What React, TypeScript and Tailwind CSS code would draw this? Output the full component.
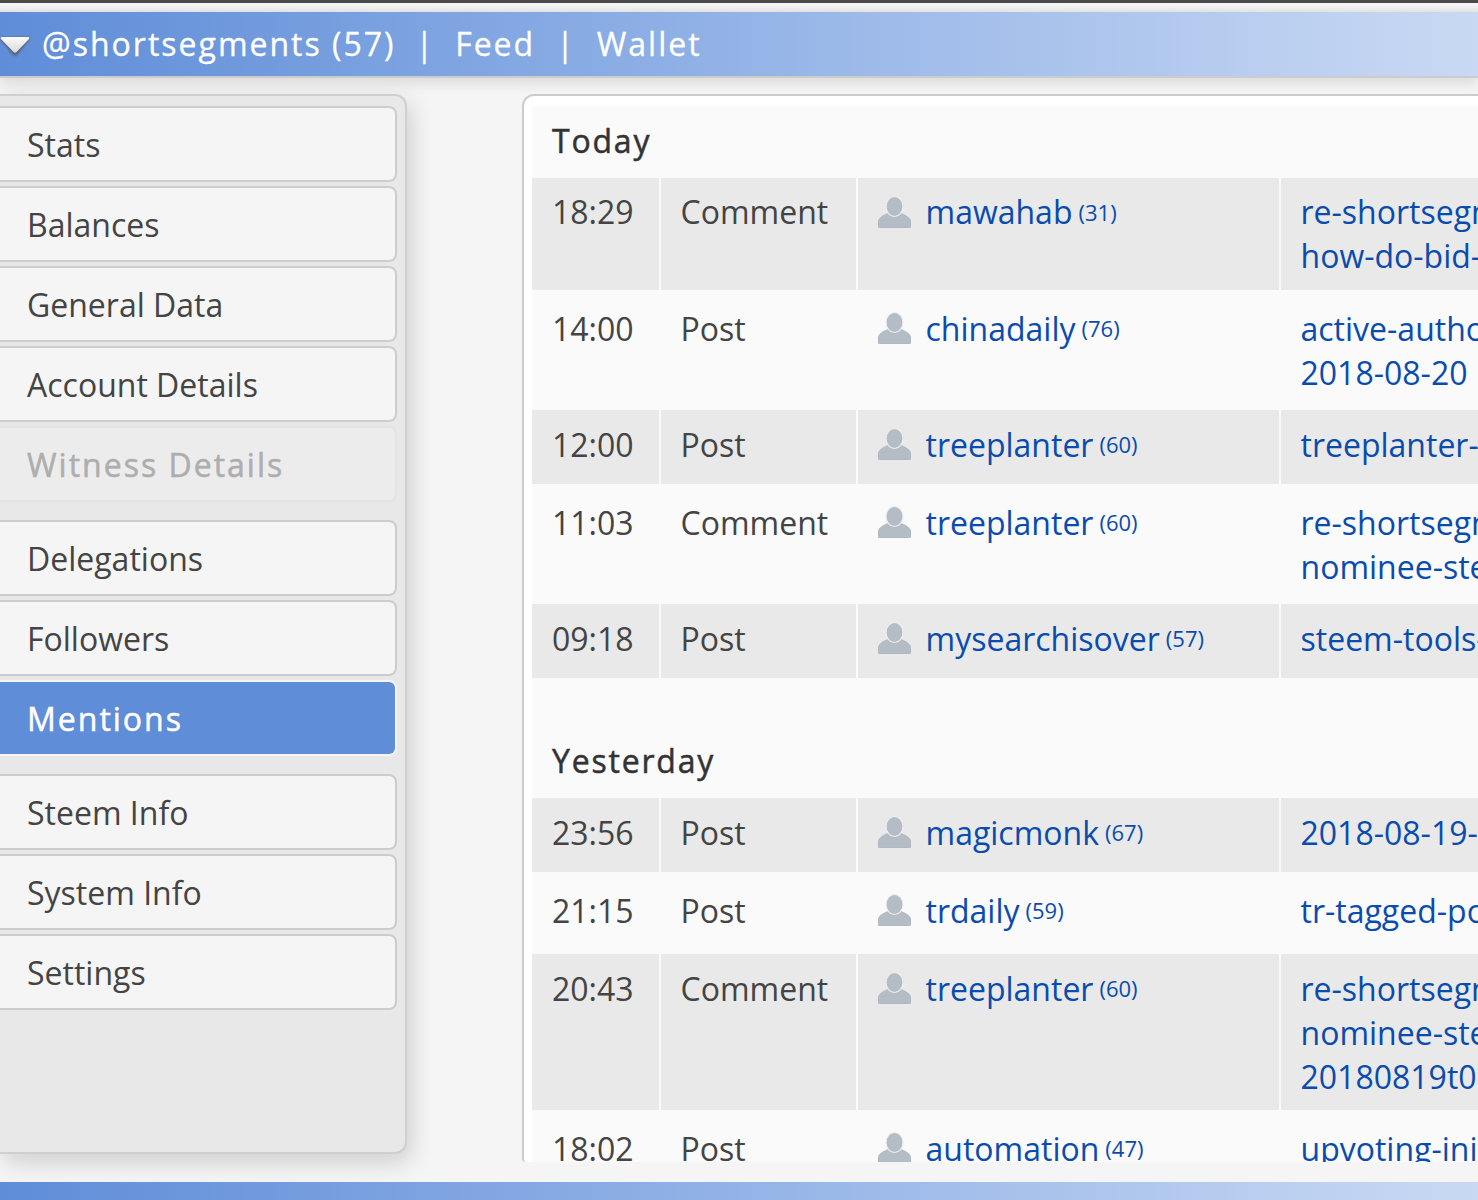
import type { ReactNode } from 'react';

const font = 'font-["Open_Sans",sans-serif]';

type Row = { time: string; kind: string; user: string; level: number; lines: string[] };

const today: Row[] = [
  { time: '18:29', kind: 'Comment', user: 'mawahab', level: 31, lines: ['re-shortsegments-', 'how-do-bid-bots-work'] },
  { time: '14:00', kind: 'Post', user: 'chinadaily', level: 76, lines: ['active-authors-report-', '2018-08-20'] },
  { time: '12:00', kind: 'Post', user: 'treeplanter', level: 60, lines: ['treeplanter-report'] },
  { time: '11:03', kind: 'Comment', user: 'treeplanter', level: 60, lines: ['re-shortsegments-', 'nominee-steemit'] },
  { time: '09:18', kind: 'Post', user: 'mysearchisover', level: 57, lines: ['steem-tools-overview'] },
];

const yesterday: Row[] = [
  { time: '23:56', kind: 'Post', user: 'magicmonk', level: 67, lines: ['2018-08-19-report'] },
  { time: '21:15', kind: 'Post', user: 'trdaily', level: 59, lines: ['tr-tagged-posts'] },
  { time: '20:43', kind: 'Comment', user: 'treeplanter', level: 60, lines: ['re-shortsegments-', 'nominee-steemit-', '20180819t0'] },
  { time: '18:02', kind: 'Post', user: 'automation', level: 47, lines: ['upvoting-initiative'] },
];

function NavButton({ children, state }: { children: ReactNode; state?: 'active' | 'off' }) {
  if (state === 'active') {
    return (
      <div className="flex h-[76px] items-center rounded-r-lg border-2 border-l-0 border-[#f5f5f5] bg-[#5f8dd8] pl-[27px] pt-[2px] text-[32px] font-medium tracking-[2px] text-white [-webkit-text-stroke:0.5px_currentColor]">
        {children}
      </div>
    );
  }
  if (state === 'off') {
    return (
      <div className="flex h-[76px] items-center rounded-r-lg border-2 border-l-0 border-[#e4e4e4] bg-[#ececec] pl-[27px] pt-[2px] text-[32px] font-medium tracking-[2px] text-[#aeaeae] [-webkit-text-stroke:0.5px_currentColor]">
        {children}
      </div>
    );
  }
  return (
    <div className="flex h-[76px] items-center rounded-r-lg border-2 border-l-0 border-[#cccccc] bg-[#f5f5f5] pl-[27px] pt-[2px] text-[32px] text-[#444444]">
      {children}
    </div>
  );
}

function UserIcon() {
  return (
    <svg width="33" height="32" viewBox="0 0 33 32" className="shrink-0" aria-hidden="true">
      <path
        d="M2 32Q0 32 0 30V26.5C0 22 5 19.5 9.5 17.5H23.5C28 19.5 33 22 33 26.5V30Q33 32 31 32Z"
        fill="#b4bdc6"
        stroke="#a4adb6"
        strokeWidth="0.5"
      />
      <ellipse cx="16.5" cy="10.5" rx="8.5" ry="10" fill="#b4bdc6" stroke="#eeeeee" strokeWidth="1.2" />
    </svg>
  );
}

function MentionRows({ rows }: { rows: Row[] }) {
  return (
    <>
      {rows.map((r, i) => {
        const bg = i % 2 === 0 ? 'bg-[#e9e9e9]' : 'bg-[#fafafa]';
        // the first row sits a pixel higher in the source
        const nudge = r.time === '18:29' ? '' : 'translate-y-[1px]';
        return (
          <tr key={r.time} className="h-[74px]">
            <td className={`${bg} w-[127px] px-[20px] pt-[12px] align-top text-[#444444]`}>
              <div className={nudge}>{r.time}</div>
            </td>
            <td className={`${bg} w-[195px] pl-[19.5px] pt-[12px] align-top text-[#444444]`}>
              <div className={nudge}>{r.kind}</div>
            </td>
            <td className={`${bg} w-[421px] pl-[20px] pt-[12px] align-top`}>
              <div className="flex h-[44px] items-center text-[#0a4cad]">
                <UserIcon />
                <span className={`ml-[14.5px] ${nudge}`}>{r.user}</span>
                <span className="ml-[6px] text-[22px]">({r.level})</span>
              </div>
            </td>
            <td className={`${bg} w-[400px] pb-[12px] pl-[19.5px] pt-[12px] align-top text-[#0a4cad]`}>
              {r.lines.map((l) => (
                <div key={l} className={`whitespace-nowrap ${nudge}`}>{l}</div>
              ))}
            </td>
          </tr>
        );
      })}
    </>
  );
}

function MentionTable({ rows }: { rows: Row[] }) {
  return (
    <table className="-mx-[2px] -my-[4px] w-[1150px] table-fixed border-separate border-spacing-x-[2px] border-spacing-y-[4px] text-[32px] leading-[44px]">
      <tbody>
        <MentionRows rows={rows} />
      </tbody>
    </table>
  );
}

export default function App() {
  return (
    <div className={`${font} flex h-[1200px] w-[1478px] flex-col overflow-hidden bg-[#f5f5f5]`}>
      <div className="h-[3px] bg-[#4a4a4a]" />
      <div className="h-[9px] bg-gradient-to-b from-[#f8f8f8] to-[#e6e6e6]" />

      <header className="flex h-[66px] items-center border-b-2 border-[#cccccc] bg-gradient-to-r from-[#5f8dd8] to-[#c9d9f3] text-[32px] tracking-[2px] text-white shadow-[0_6px_12px_rgba(0,0,0,0.1)] [-webkit-text-stroke:0.3px_currentColor]">
        <svg width="32" height="26" viewBox="0 0 32 26" className="mt-[3px] shrink-0" aria-hidden="true">
          <defs>
            <linearGradient id="tri" x1="0" y1="0" x2="0" y2="1">
              <stop offset="0" stopColor="#fbfbfb" />
              <stop offset="1" stopColor="#d8d8d8" />
            </linearGradient>
            <filter id="soft" x="-20%" y="-20%" width="140%" height="140%">
              <feGaussianBlur stdDeviation="0.9" />
            </filter>
          </defs>
          <path d="M2 4H28Q31 4 29 7L17 22Q15 24 13 22L1 7Q-1 4 2 4Z" fill="#555555" opacity="0.75" filter="url(#soft)" />
          <path d="M2 4H28Q30 4 29 6L16.5 19Q15 20.5 13.5 19L1 6Q0 4 2 4Z" fill="url(#tri)" />
        </svg>
        <span className="ml-[10px]">@shortsegments (57)</span>
        <span className="ml-[20px]">|</span>
        <span className="ml-[20px]">Feed</span>
        <span className="ml-[21px]">|</span>
        <span className="ml-[21px]">Wallet</span>
      </header>

      <main className="flex min-h-0 flex-1 pt-[16px]">
        <aside className="mb-[28px] flex w-[407px] shrink-0 flex-col rounded-r-xl border-2 border-l-0 border-[#cfcfcf] bg-[#e8e8e8] pr-[8px] pt-[10px] shadow-[4px_8px_24px_rgba(0,0,0,0.16)]">
          <div className="flex flex-col gap-[4px]">
            <NavButton>Stats</NavButton>
            <NavButton>Balances</NavButton>
            <NavButton>General Data</NavButton>
            <NavButton>Account Details</NavButton>
            <NavButton state="off">Witness Details</NavButton>
          </div>
          <div className="mt-[18px] flex flex-col gap-[4px]">
            <NavButton>Delegations</NavButton>
            <NavButton>Followers</NavButton>
            <NavButton state="active">Mentions</NavButton>
          </div>
          <div className="mt-[18px] flex flex-col gap-[4px]">
            <NavButton>Steem Info</NavButton>
            <NavButton>System Info</NavButton>
            <NavButton>Settings</NavButton>
          </div>
        </aside>

        <section className="mb-[20px] ml-[115px] min-w-0 flex-1 overflow-hidden rounded-tl-xl rounded-bl-sm border-l-2 border-t-2 border-[#cccccc] bg-white pl-[8px] pt-[10px]">
          <div className="h-full w-[1200px] bg-[#fafafa]">
            <h2 className="flex h-[72px] items-center pb-[3px] pl-[20px] text-[32px] font-medium tracking-[1.8px] text-[#333333] [-webkit-text-stroke:0.5px_currentColor]">Today</h2>
            <MentionTable rows={today} />
            <h2 className="mt-[47px] flex h-[73px] items-center pb-[2px] pl-[20px] text-[32px] font-medium tracking-[1.8px] text-[#333333] [-webkit-text-stroke:0.5px_currentColor]">Yesterday</h2>
            <MentionTable rows={yesterday} />
          </div>
        </section>
      </main>

      <div className="h-[18px] bg-gradient-to-r from-[#5f8dd8] to-[#c9d9f3]" />
    </div>
  );
}
